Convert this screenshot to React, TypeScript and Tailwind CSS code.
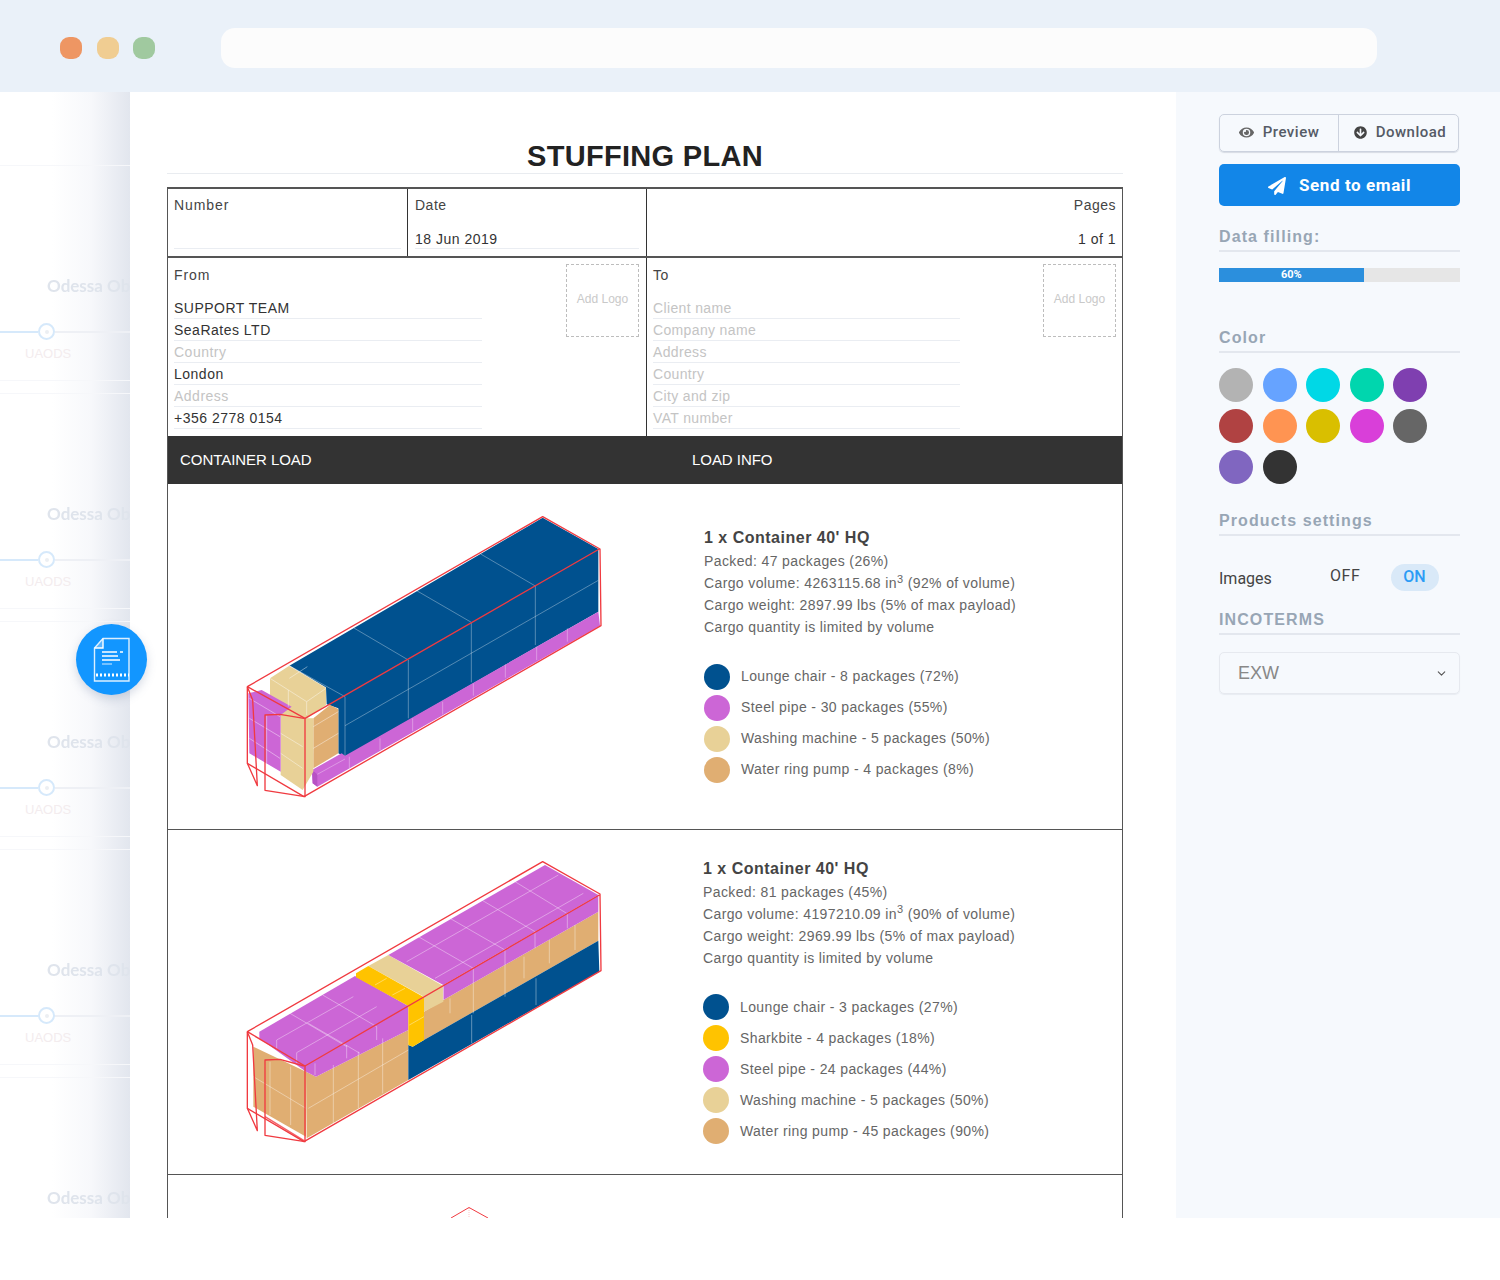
import { ChevronDown } from "lucide-react";
import { FaArrowCircleDown, FaEye, FaPaperPlane } from "react-icons/fa";

const NAVY = "#00518f";
const PURPLE = "#cc66d6";
const CREAM = "#e8d197";
const ORANGE = "#e0ae72";
const GOLD = "#ffc300";
const WIRE = "#f03a40";

const swatches = [
  "#b3b3b3", "#66a3ff", "#00d8e6", "#00d6ae", "#7f3fb0",
  "#b04242", "#ff9452", "#d9bf00", "#d93fd9", "#666666",
  "#8066c0", "#333333",
];

const fromLines = [
  { text: "SUPPORT TEAM", filled: true },
  { text: "SeaRates LTD", filled: true },
  { text: "Country", filled: false },
  { text: "London", filled: true },
  { text: "Address", filled: false },
  { text: "+356 2778 0154", filled: true },
];

const toLines = ["Client name", "Company name", "Address", "Country", "City and zip", "VAT number"];

function SideRow({ last }: { last?: boolean }) {
  return (
    <div className="h-[228px] shrink-0 pt-[11px]">
      <div className="h-[216px] border-y border-[#f6f7fa]">
        <div className="ml-[47px] mt-[110px] whitespace-nowrap font-['Lato',sans-serif] text-[17px] leading-5 font-bold text-[#dfe4ec] blur-[0.6px]">
          Odessa Ob
        </div>
        {!last && (
          <>
            <div className="mt-[35px] flex h-[1px] items-center">
              <div className="h-[2px] w-[38px] bg-[#d6e9fb]" />
              <div className="flex h-[17px] w-[17px] shrink-0 items-center justify-center rounded-full border-2 border-[#d6e9fb] bg-white">
                <div className="h-1 w-1 rounded-full bg-[#eceff3]" />
              </div>
              <div className="h-[2px] flex-1 bg-[#eef0f5]" />
            </div>
            <div className="ml-[25px] mt-[14px] text-[13px] leading-4 text-[#f3ecee]">UAODS</div>
          </>
        )}
      </div>
    </div>
  );
}

function Wire({ points, opacity = 1 }: { points: string; opacity?: number }) {
  return <polyline points={points} fill="none" stroke={WIRE} strokeWidth={4} strokeOpacity={opacity} strokeLinejoin="round" />;
}

function Grid({ lines, opacity = 0.35 }: { lines: number[][]; opacity?: number }) {
  return (
    <g stroke="#ffffff" strokeOpacity={opacity} strokeWidth={2.5}>
      {lines.map((l, i) => (
        <line key={i} x1={l[0]} y1={l[1]} x2={l[2]} y2={l[3]} />
      ))}
    </g>
  );
}

function LoadOne() {
  return (
    <svg viewBox="0 0 1140 900" className="h-[300px] w-[380px] shrink-0">
      <polygon fill={NAVY} points="938,38 1105,132 1105,320 345,755 325,745 325,610 290,598 288,548 178,482" />
      <polygon fill={PURPLE} points="335,745 345,752 1105,320 1110,362 262,845 248,835 246,795" />
      <polygon fill="#b752c4" points="246,795 262,808 262,845 248,835" />
      <polygon fill={ORANGE} points="250,640 300,600 325,612 325,745 250,790" />
      <polygon fill={CREAM} points="120,520 178,482 288,548 288,600 232,640 250,640 250,800 218,855 152,810 152,620 120,590" />
      <polygon fill={PURPLE} points="55,565 95,555 185,605 152,630 152,800 58,745" />
      <Grid
        opacity={0.4}
        lines={[
          [178, 482, 345, 575], [370, 368, 535, 465], [560, 257, 724, 352], [752, 147, 916, 243],
          [345, 575, 345, 752], [535, 465, 535, 640], [724, 352, 724, 532], [916, 243, 916, 420],
          [345, 662, 1105, 226], [358, 755, 358, 790], [450, 700, 450, 735], [548, 640, 548, 678],
          [638, 590, 638, 628], [730, 535, 730, 572], [826, 478, 826, 518], [920, 425, 920, 465], [1012, 370, 1012, 410],
          [262, 808, 345, 762],
        ]}
      />
      <Grid
        opacity={0.5}
        lines={[
          [120, 520, 230, 590], [178, 482, 288, 548], [178, 520, 232, 485], [230, 590, 288, 550], [230, 590, 230, 630],
          [175, 555, 175, 605], [250, 665, 325, 620], [250, 730, 325, 685], [152, 685, 218, 725], [152, 745, 218, 790],
          [58, 640, 150, 695], [58, 700, 150, 760], [58, 580, 150, 635], [110, 630, 110, 775],
        ]}
      />
      <Wire points="52,545 938,35 1110,132 1113,362 222,875 52,775 52,545 225,640 1108,132" />
      <Wire points="225,640 225,875 105,856 105,630 150,628 222,640" />
      <Wire points="52,545 68,585 82,842 52,775" />
    </svg>
  );
}

function LoadTwo() {
  return (
    <svg viewBox="0 0 1140 900" className="h-[300px] w-[380px] shrink-0">
      <polygon fill={ORANGE} points="70,590 228,665 228,860 70,770" />
      <polygon fill={ORANGE} points="228,665 258,680 535,540 535,690 230,865" />
      <polygon fill={ORANGE} points="582,485 640,450 1105,185 1105,272 582,570" />
      <polygon fill={NAVY} points="535,585 548,590 582,570 1105,272 1108,365 535,690" />
      <polygon fill={CREAM} points="415,348 475,315 640,408 640,455 582,485 582,440" />
      <polygon fill={PURPLE} points="88,545 375,378 535,468 225,648 88,565" />
      <polygon fill={PURPLE} points="88,565 225,648 535,465 535,540 258,680 228,665" />
      <polygon fill={PURPLE} points="475,315 945,45 1105,135 640,405" />
      <polygon fill={PURPLE} points="640,405 1105,135 1105,185 640,450" />
      <polygon fill={GOLD} points="378,370 415,348 582,442 535,468 378,382" />
      <polygon fill={GOLD} points="535,468 582,442 582,570 548,590 535,585" />
      <Grid
        opacity={0.45}
        lines={[
          [140, 570, 370, 440], [200, 608, 440, 470], [278, 435, 440, 530], [180, 490, 350, 590], [235, 520, 390, 610],
          [565, 260, 730, 355], [660, 205, 825, 300], [755, 150, 915, 245], [855, 95, 1010, 190],
          [530, 335, 985, 75], [615, 385, 1060, 130], [730, 355, 730, 490], [825, 300, 825, 440], [915, 245, 915, 295], [1012, 190, 1012, 235],
          [660, 445, 660, 490], [882, 320, 882, 385], [958, 270, 958, 340], [1035, 225, 1035, 300],
          [725, 495, 725, 580], [918, 385, 918, 465], [310, 645, 310, 820], [385, 605, 385, 775], [458, 565, 458, 730],
          [235, 775, 535, 600], [120, 635, 120, 795], [182, 650, 182, 825], [70, 680, 228, 775], [440, 530, 440, 570], [350, 585, 350, 625],
          [140, 570, 140, 600], [200, 608, 200, 640], [255, 640, 255, 675], [640, 405, 640, 450],
          [538, 525, 582, 500], [435, 405, 470, 385], [487, 435, 525, 415],
        ]}
      />
      <Wire points="52,545 938,35 1110,132 1113,362 222,875 52,775 52,545 225,648 1108,135" />
      <Wire points="225,648 225,875 105,856 105,630 150,628 222,648" />
      <Wire points="52,545 68,585 82,842 52,775" />
      <Wire points="105,800 222,872" opacity={0.8} />
    </svg>
  );
}

function Legend({ color, label }: { color: string; label: string }) {
  return (
    <div className="flex h-[31px] items-center gap-[11px]">
      <span className="h-[26px] w-[26px] shrink-0 rounded-full" style={{ backgroundColor: color }} />
      <span>{label}</span>
    </div>
  );
}

function LoadRow({
  drawing,
  rowClass,
  textClass,
  title,
  packed,
  volume,
  volumeRest,
  weight,
  legend,
}: {
  drawing: React.ReactNode;
  rowClass: string;
  textClass: string;
  title: string;
  packed: string;
  volume: string;
  volumeRest: string;
  weight: string;
  legend: { color: string; label: string }[];
}) {
  return (
    <div className={`flex shrink-0 border-b border-[#555] pl-[62px] ${rowClass}`}>
      {drawing}
      <div className={`flex flex-col justify-center text-[14px] tracking-[0.38px] text-[#666] ${textClass}`}>
        <div className="text-[16px] leading-[24px] font-bold tracking-[0.5px] text-[#444]">{title}</div>
        <div className="leading-[22px]">{packed}</div>
        <div className="leading-[22px]">
          {volume}
          <sup className="text-[11px]">3</sup>
          {volumeRest}
        </div>
        <div className="leading-[22px]">{weight}</div>
        <div className="leading-[22px]">Cargo quantity is limited by volume</div>
        <div className="mt-[23px]">
          {legend.map((l) => (
            <Legend key={l.label} color={l.color} label={l.label} />
          ))}
        </div>
      </div>
    </div>
  );
}

function SectionTitle({ children, className }: { children: React.ReactNode; className?: string }) {
  return (
    <div className={`border-b-2 border-[#e3e7ee] pb-[3px] font-['Liberation_Sans',sans-serif] text-[16px] leading-5 font-bold tracking-[1.1px] text-[#98a6b5] ${className ?? ""}`}>
      {children}
    </div>
  );
}

function AddLogo() {
  return (
    <div className="flex h-[73px] w-[73px] items-center justify-center border border-dashed border-[#bdbdbd] pb-[3px] text-[12px] tracking-normal text-[#c9c9c9]">
      Add Logo
    </div>
  );
}

export default function App() {
  return (
    <div className="h-[1280px] w-[1500px] overflow-hidden bg-white font-['Liberation_Sans',sans-serif]">
      <div className="flex h-[92px] items-center bg-[#eaf1f9] pl-[60px] pt-[3px]">
        <div className="flex gap-[14.5px]">
          <span className="h-[22px] w-[22px] rounded-[9px] bg-[#ee9663]" />
          <span className="h-[22px] w-[22px] rounded-[9px] bg-[#f0cd92]" />
          <span className="h-[22px] w-[22px] rounded-[9px] bg-[#a0c99f]" />
        </div>
        <div className="ml-[66px] h-10 w-[1156px] rounded-[14px] bg-[#fcfcfc]" />
      </div>

      <div className="relative flex h-[1126px] overflow-hidden">
        <div className="relative w-[130px] shrink-0 overflow-hidden">
          <div className="absolute inset-0 bg-gradient-to-r from-transparent from-40% via-[#f7f8fb] via-70% to-[#e2e6ee]" />
          <div className="relative flex flex-col pt-[62px]">
            <SideRow />
            <SideRow />
            <SideRow />
            <SideRow />
            <SideRow last />
          </div>
        </div>

        <div className="flex w-[1046px] shrink-0 flex-col bg-white pl-[37px] pr-[53px] pt-[47px]">
          <h1 className="border-b border-[#e9ecf0] text-center text-[29px] leading-[34px] font-bold tracking-[0.3px] text-[#222]">
            STUFFING PLAN
          </h1>
          <div className="mt-[13px] flex flex-1 flex-col border-x border-t-2 border-[#555] text-[14px] tracking-[0.5px] text-[#333]">
            <div className="flex h-[69px] shrink-0 border-b-2 border-[#555]">
              <div className="flex w-[240px] flex-col justify-between border-r border-[#333] px-[6px] pt-[6px]">
                <div className="leading-5 tracking-[0.9px] text-[#444]">Number</div>
                <div className="mb-[7px] h-[22px] border-b border-[#eaedf2]" />
              </div>
              <div className="flex w-[239px] flex-col justify-between border-r border-[#333] px-[7px] pt-[6px]">
                <div className="leading-5 text-[#444]">Date</div>
                <div className="mb-[7px] h-[22px] border-b border-[#eaedf2] leading-[24px]">18 Jun 2019</div>
              </div>
              <div className="flex flex-1 flex-col justify-between px-[6px] pt-[6px] text-right">
                <div className="leading-5 text-[#444]">Pages</div>
                <div className="mb-[7px] h-[22px] leading-[24px]">1 of 1</div>
              </div>
            </div>

            <div className="flex h-[178px] shrink-0">
              <div className="flex w-[479px] justify-between border-r border-[#333] pl-[6px] pr-[7px] pt-[6px]">
                <div className="w-[308px]">
                  <div className="mb-[11px] h-[22px] leading-[22px] tracking-[0.9px] text-[#444]">From</div>
                  {fromLines.map((l) => (
                    <div key={l.text} className={`h-[22px] border-b border-[#eaedf2] leading-[22px] ${l.filled ? "text-[#333]" : "text-[#c4c4c4]"}`}>
                      {l.text}
                    </div>
                  ))}
                </div>
                <AddLogo />
              </div>
              <div className="flex flex-1 justify-between pl-[6px] pr-[6px] pt-[6px]">
                <div className="w-[307px]">
                  <div className="mb-[11px] h-[22px] leading-[22px] text-[#444]">To</div>
                  {toLines.map((l) => (
                    <div key={l} className="h-[22px] border-b border-[#eaedf2] leading-[22px] tracking-[0.35px] text-[#c4c4c4]">
                      {l}
                    </div>
                  ))}
                </div>
                <AddLogo />
              </div>
            </div>

            <div className="flex h-[48px] shrink-0 items-center bg-[#333] pl-[12px] text-[15px] tracking-[-0.05px] text-white">
              <div className="w-[512px]">CONTAINER LOAD</div>
              <div>LOAD INFO</div>
            </div>

            <LoadRow
              drawing={<LoadOne />}
              rowClass="h-[346px] pt-[21px]"
              textClass="ml-[94px] h-[301px]"
              title="1 x Container 40' HQ"
              packed="Packed: 47 packages (26%)"
              volume="Cargo volume: 4263115.68 in"
              volumeRest=" (92% of volume)"
              weight="Cargo weight: 2897.99 lbs (5% of max payload)"
              legend={[
                { color: NAVY, label: "Lounge chair - 8 packages (72%)" },
                { color: PURPLE, label: "Steel pipe - 30 packages (55%)" },
                { color: CREAM, label: "Washing machine - 5 packages (50%)" },
                { color: ORANGE, label: "Water ring pump - 4 packages (8%)" },
              ]}
            />
            <LoadRow
              drawing={<LoadTwo />}
              rowClass="h-[345px] pt-[20px]"
              textClass="ml-[93px] h-[303px]"
              title="1 x Container 40' HQ"
              packed="Packed: 81 packages (45%)"
              volume="Cargo volume: 4197210.09 in"
              volumeRest=" (90% of volume)"
              weight="Cargo weight: 2969.99 lbs (5% of max payload)"
              legend={[
                { color: NAVY, label: "Lounge chair - 3 packages (27%)" },
                { color: GOLD, label: "Sharkbite - 4 packages (18%)" },
                { color: PURPLE, label: "Steel pipe - 24 packages (44%)" },
                { color: CREAM, label: "Washing machine - 5 packages (50%)" },
                { color: ORANGE, label: "Water ring pump - 45 packages (90%)" },
              ]}
            />
            <div className="flex-1 pl-[282px] pt-[32px]">
              <svg viewBox="0 0 40 12" className="h-[12px] w-[40px]">
                <polyline points="1,11 19,0.5 38,11" fill="none" stroke={WIRE} strokeWidth={1} />
                <line x1={19} y1={1} x2={19} y2={12} stroke={WIRE} strokeWidth={1} strokeOpacity={0.3} strokeDasharray="1 1" />
              </svg>
            </div>
          </div>
        </div>

        <div className="flex w-[324px] shrink-0 flex-col bg-[#f6f9fd] pl-[43px] pr-[40px] pt-[22px] font-['Roboto',sans-serif]">
          <div className="flex h-[38px] w-[240px] rounded-[5px] border border-[#ccd2de] pb-[2px] text-[15px] font-medium tracking-[0.5px] text-[#555b66] shadow-[0_1px_1px_rgba(120,130,150,0.25)]">
            <div className="flex w-[118px] items-center justify-center gap-[9px]">
              <FaEye className="h-[15px] w-[15px] text-[#666]" />
              Preview
            </div>
            <div className="-mb-[2px] border-r border-[#ccd2de]" />
            <div className="flex flex-1 items-center justify-center gap-[9px] pl-[3px]">
              <FaArrowCircleDown className="h-[13px] w-[13px] text-[#444]" />
              Download
            </div>
          </div>
          <div className="mt-[12px] flex h-[42px] items-center justify-center gap-[13px] rounded-[5px] bg-[#1286e8] pt-[1px] text-[17px] font-bold tracking-[0.6px] text-white">
            <FaPaperPlane className="h-[18px] w-[18px]" />
            Send to email
          </div>

          <SectionTitle className="mt-[21px]">Data filling:</SectionTitle>
          <div className="mt-[16px] flex h-[14px] bg-[#e6e6e6]">
            <div className="flex w-[60%] items-center justify-center bg-[#2b8fdd] text-[11px] font-bold text-white">60%</div>
          </div>

          <SectionTitle className="mt-[46px]">Color</SectionTitle>
          <div className="mt-[15px] grid grid-cols-[repeat(5,34px)] gap-x-[9.5px] gap-y-[7px]">
            {swatches.map((c) => (
              <span key={c} className="h-[34px] w-[34px] rounded-full" style={{ backgroundColor: c }} />
            ))}
          </div>

          <SectionTitle className="mt-[27px]">Products settings</SectionTitle>
          <div className="mt-[27px] flex h-[28px] items-center text-[#444]">
            <span className="mt-[3px] w-[111px] text-[16px]">Images</span>
            <span className="pb-[2px] text-[16px] tracking-[0.6px]">OFF</span>
            <span className="ml-[30px] flex h-[27px] w-[48px] items-center justify-center rounded-full bg-[#d9e9f8] pb-[1px] text-[16px] font-medium text-[#2c9cf5]">ON</span>
          </div>

          <SectionTitle className="mt-[19px]">INCOTERMS</SectionTitle>
          <div className="mt-[17px] flex h-[42px] items-center justify-between rounded-[5px] border border-[#e6e9ef] pl-[18px] pr-[11px] font-['Liberation_Sans',sans-serif] text-[18px] text-[#888] shadow-[0_1px_1px_rgba(120,130,150,0.1)]">
            EXW
            <ChevronDown className="h-[13px] w-[13px] text-[#555]" />
          </div>
        </div>

        <div className="absolute left-[76px] top-[532px] flex h-[71px] w-[71px] items-center justify-center rounded-full bg-[#1296ff] shadow-[0_4px_10px_rgba(90,110,150,0.25)]">
          <svg viewBox="0 0 38 46" className="h-[46px] w-[38px]" fill="none" stroke="#ffffff">
            <path d="M10 1.5 H36 V44 H1.5 V11 Z" strokeWidth={1.4} opacity={0.85} />
            <path d="M10 1.5 V11 H1.5" strokeWidth={1.4} fill="#ffffff" fillOpacity={0.3} />
            <path d="M9 15 H24 M27 15 H30 M9 19 H25 M9 23 H27" strokeWidth={1.4} />
            <path d="M9 27 H19" strokeWidth={1.4} opacity={0.6} />
            <path d="M3 38 H36" strokeWidth={3} strokeDasharray="2 2" />
          </svg>
        </div>
      </div>
    </div>
  );
}
